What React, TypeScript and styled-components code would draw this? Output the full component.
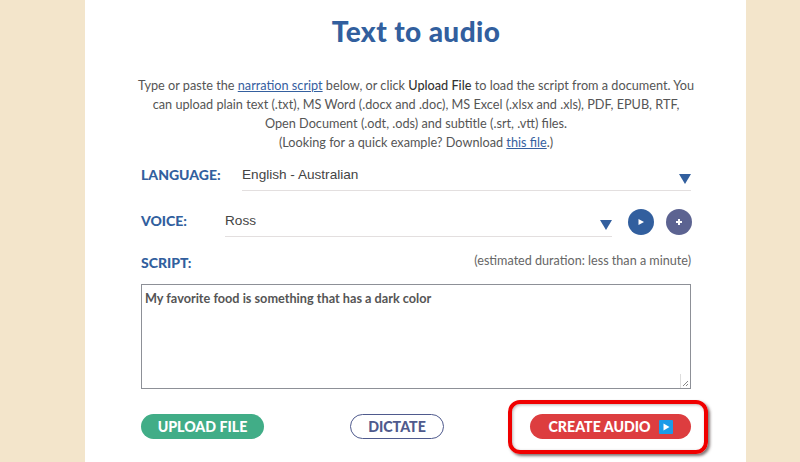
import React from 'react';
import styled, { createGlobalStyle } from 'styled-components';

const GlobalStyle = createGlobalStyle`
  html, body {
    margin: 0;
    padding: 0;
    height: 462px;
    overflow: hidden;
    background-color: #f3e5cb;
  }
`;

const Page = styled.div`
  width: 800px;
  height: 462px;
  padding-left: 85px;
  box-sizing: border-box;
`;

const Panel = styled.main`
  width: 661px;
  height: 462px;
  box-sizing: border-box;
  padding: 14px 55px 0 56px;
  background-color: #fff;
  display: flex;
  flex-direction: column;
`;

const Title = styled.h1`
  margin: 0;
  font-family: Lato, sans-serif;
  font-size: 28px;
  line-height: 34px;
  font-weight: 900;
  letter-spacing: 0.4px;
  text-align: center;
  color: #325f9e;
`;

const Intro = styled.p`
  margin: 28px -10px 0;
  font-family: Lato, sans-serif;
  font-size: 12.7px;
  line-height: 19px;
  text-align: center;
  white-space: nowrap;
  color: #555;
`;

const TextLink = styled.a`
  color: #35609f;
  text-decoration: underline;
`;

const Strong = styled.span`
  color: #333;
  font-weight: 500;
`;

const Row = styled.div<{ $top: number; $bleed?: number }>`
  display: flex;
  align-items: flex-start;
  margin-top: ${(props) => props.$top}px;
  margin-right: ${(props) => -(props.$bleed ?? 0)}px;
`;

const FieldLabel = styled.label<{ $width?: number }>`
  flex: 0 0 ${(props) => (props.$width ? `${props.$width}px` : 'auto')};
  font-family: Lato, sans-serif;
  font-size: 14px;
  line-height: 24px;
  font-weight: 900;
  color: #325f9e;
`;

const Select = styled.div`
  flex: 1;
  height: 28px;
  box-sizing: border-box;
  display: flex;
  justify-content: space-between;
  align-items: flex-start;
  border-bottom: 1px solid #e3dfdf;
  font-family: 'Liberation Sans', Arial, sans-serif;
  font-size: 13.6px;
  line-height: 24px;
  color: #444;
`;

const Caret = styled.span`
  width: 0;
  height: 0;
  margin-top: 11px;
  border-left: 6px solid transparent;
  border-right: 6px solid transparent;
  border-top: 10px solid #325f9e;
`;

const RoundButton = styled.button<{ $color: string; $gap: number }>`
  width: 26px;
  height: 26px;
  margin-left: ${(props) => props.$gap}px;
  padding: 0;
  border: none;
  border-radius: 50%;
  display: flex;
  align-items: center;
  justify-content: center;
  background-color: ${(props) => props.$color};
`;

const ScriptHead = styled.div`
  display: flex;
  justify-content: space-between;
  align-items: center;
  height: 20px;
  margin-top: 16px;
`;

const Estimate = styled.span`
  font-family: Lato, sans-serif;
  font-size: 12.6px;
  color: #666;
  margin-top: -5px;
`;

const ScriptBox = styled.div`
  position: relative;
  height: 105px;
  margin-top: 11px;
  box-sizing: border-box;
  padding: 5px 3px;
  border: 1px solid #8d9097;
  font-family: Lato, sans-serif;
  font-size: 12.7px;
  line-height: 16px;
  font-weight: 700;
  color: #555;
`;

const Grip = styled.svg`
  position: absolute;
  right: 0;
  bottom: 0;
`;

const Actions = styled.div`
  display: flex;
  justify-content: space-between;
  margin-top: 25px;
`;

const Pill = styled.button<{ $bg: string; $fg: string; $border?: string; $width: number }>`
  position: relative;
  width: ${(props) => props.$width}px;
  height: 25px;
  padding: 0;
  box-sizing: border-box;
  display: flex;
  align-items: center;
  justify-content: center;
  gap: 8px;
  border-radius: 13px;
  border: ${(props) => (props.$border ? `1.5px solid ${props.$border}` : 'none')};
  background-color: ${(props) => props.$bg};
  color: ${(props) => props.$fg};
  font-family: Lato, sans-serif;
  font-size: 14.2px;
  font-weight: 900;
`;

const Highlight = styled.span`
  position: absolute;
  left: -22px;
  top: -14px;
  width: 200px;
  height: 54px;
  box-sizing: border-box;
  border: 4px solid #f00000;
  border-radius: 12px;
  box-shadow: 2px 2px 3px rgba(60, 40, 40, 0.65), inset 1px 1px 3px rgba(60, 40, 40, 0.35);
`;

const PlayBadge = styled.svg`
  flex: none;
`;

export default function App() {
  return (
    <Page>
      <GlobalStyle />
      <Panel>
        <Title>Text to audio</Title>

        <Intro>
          Type or paste the <TextLink>narration script</TextLink> below, or click{' '}
          <Strong>Upload File</Strong> to load the script from a document. You
          <br />
          can upload plain text (.txt), MS Word (.docx and .doc), MS Excel (.xlsx and .xls), PDF, EPUB, RTF,
          <br />
          Open Document (.odt, .ods) and subtitle (.srt, .vtt) files.
          <br />
          (Looking for a quick example? Download <TextLink>this file</TextLink>.)
        </Intro>

        <Row $top={11}>
          <FieldLabel $width={101}>LANGUAGE:</FieldLabel>
          <Select>
            English - Australian
            <Caret />
          </Select>
        </Row>

        <Row $top={18} $bleed={1}>
          <FieldLabel $width={84}>VOICE:</FieldLabel>
          <Select>
            Ross
            <Caret />
          </Select>
          <RoundButton $color="#325f9e" $gap={16}>
            <svg width="8" height="8" viewBox="0 0 8 8">
              <path d="M1.5 1 L7 4 L1.5 7 Z" fill="#fff" />
            </svg>
          </RoundButton>
          <RoundButton $color="#5c6391" $gap={12}>
            <svg width="8" height="8" viewBox="0 0 8 8">
              <path d="M4 1 V7 M1 4 H7" stroke="#fff" strokeWidth="2" />
            </svg>
          </RoundButton>
        </Row>

        <ScriptHead>
          <FieldLabel>SCRIPT:</FieldLabel>
          <Estimate>(estimated duration: less than a minute)</Estimate>
        </ScriptHead>

        <ScriptBox>
          My favorite food is something that has a dark color
          <Grip width="10" height="14" viewBox="0 0 10 14">
            <path d="M0.5 0 V14" stroke="#ddd" />
            <path d="M3 12 L8 7 M6 12 L8 10" stroke="#888" />
          </Grip>
        </ScriptBox>

        <Actions>
          <Pill $bg="#41ad87" $fg="#fff" $width={123}>
            UPLOAD FILE
          </Pill>
          <Pill $bg="#fff" $fg="#4f5a8d" $border="#4f5a8d" $width={94}>
            DICTATE
          </Pill>
          <Pill $bg="#dd3d3f" $fg="#fff" $width={161}>
            CREATE AUDIO
            <PlayBadge width="14" height="14" viewBox="0 0 14 14">
              <rect width="14" height="14" rx="1" fill="#1b9be8" />
              <path d="M4.5 3.5 L10.5 7 L4.5 10.5 Z" fill="#fff" />
            </PlayBadge>
            <Highlight />
          </Pill>
        </Actions>
      </Panel>
    </Page>
  );
}
